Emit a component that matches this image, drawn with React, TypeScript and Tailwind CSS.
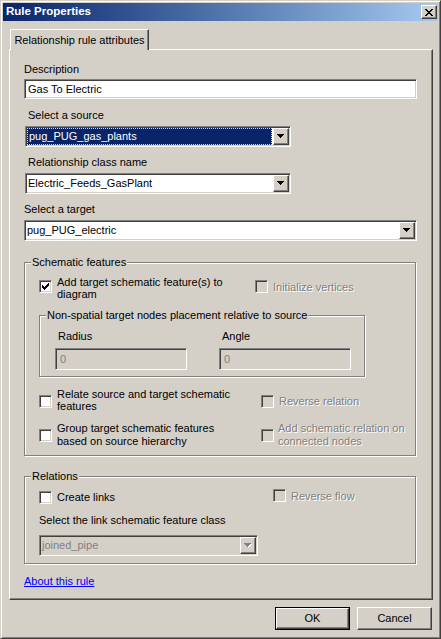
import type { ReactNode } from 'react'

const sunken =
  'border border-t-[#808080] border-l-[#808080] border-b-white border-r-white shadow-[inset_1px_1px_0_#404040,inset_-1px_-1px_0_#d4d0c8]'
const raised =
  'border border-t-white border-l-white border-b-[#404040] border-r-[#404040] shadow-[inset_-1px_-1px_0_#808080]'
const etched = 'relative border border-[#808080] shadow-[inset_1px_1px_0_white,1px_1px_0_white]'
const dim = 'text-[#808080] [text-shadow:1px_1px_0_white]'

const CHECK = [
  [6, 0], [5, 1], [6, 1], [0, 2], [4, 2], [5, 2], [6, 2], [0, 3], [1, 3], [3, 3], [4, 3],
  [5, 3], [0, 4], [1, 4], [2, 4], [3, 4], [4, 4], [1, 5], [2, 5], [3, 5], [2, 6],
]

const CLOSE = [
  [0, 0], [1, 0], [6, 0], [7, 0], [1, 1], [2, 1], [5, 1], [6, 1], [2, 2], [3, 2], [4, 2],
  [5, 2], [3, 3], [4, 3], [2, 4], [3, 4], [4, 4], [5, 4], [1, 5], [2, 5], [5, 5], [6, 5],
  [0, 6], [1, 6], [6, 6], [7, 6],
]

function Pixels({ cells, w, h, color }: { cells: number[][]; w: number; h: number; color: string }) {
  return (
    <svg width={w} height={h} viewBox={`0 0 ${w} ${h}`} shapeRendering="crispEdges">
      {cells.map(([x, y]) => (
        <rect key={`${x}-${y}`} x={x} y={y} width={1} height={1} fill={color} />
      ))}
    </svg>
  )
}

function Arrow({ disabled }: { disabled?: boolean }) {
  const tri = 'M0 0H7V1H6V2H5V3H4V4H3V3H2V2H1V1H0Z'
  return (
    <svg width={8} height={5} viewBox="0 0 8 5" shapeRendering="crispEdges">
      {disabled && <path d={tri} fill="#ffffff" transform="translate(1 1)" />}
      <path d={tri} fill={disabled ? '#808080' : '#000000'} />
    </svg>
  )
}

function CheckBox({ checked, disabled }: { checked?: boolean; disabled?: boolean }) {
  return (
    <div
      className={`flex h-[13px] w-[13px] shrink-0 items-center justify-center ${sunken} ${
        disabled ? 'bg-[#d4d0c8]' : 'bg-white'
      }`}
    >
      {checked && <Pixels cells={CHECK} w={7} h={7} color="#000000" />}
    </div>
  )
}

function Combo({
  value,
  className,
  selected,
  disabled,
}: {
  value: string
  className: string
  selected?: boolean
  disabled?: boolean
}) {
  return (
    <div className={`flex h-[21px] p-[1px] ${sunken} ${className} ${disabled ? 'bg-[#d4d0c8]' : 'bg-white'}`}>
      <div
        className={`mr-[1px] flex flex-1 items-center pl-[1px] leading-[13px] ${
          selected
            ? 'border border-dotted border-[#f0dca0] bg-[#0a246a] text-white'
            : disabled
              ? 'text-[#808080]'
              : ''
        }`}
      >
        {value}
      </div>
      <div className={`flex h-[17px] w-[16px] shrink-0 items-center justify-center bg-[#d4d0c8] ${raised}`}>
        <Arrow disabled={disabled} />
      </div>
    </div>
  )
}

function Group({ label, className, children }: { label: string; className: string; children: ReactNode }) {
  return (
    <div className={`${etched} ${className}`}>
      <span className="absolute -top-[7px] left-[6px] bg-[#d4d0c8] px-[1px] leading-[13px]">{label}</span>
      {children}
    </div>
  )
}

function Button({ children, isDefault }: { children: ReactNode; isDefault?: boolean }) {
  if (isDefault) {
    return (
      <div className="h-[23px] w-[75px] border border-black">
        <div className={`flex h-full w-full items-center justify-center ${raised}`}>{children}</div>
      </div>
    )
  }
  return <div className={`flex h-[23px] w-[75px] items-center justify-center ${raised}`}>{children}</div>
}

export default function App() {
  return (
    <div className="h-[639px] w-[441px] overflow-hidden border border-t-[#d4d0c8] border-l-[#d4d0c8] border-r-[#404040] border-b-[#404040] bg-[#d4d0c8] p-[2px] font-['Liberation_Sans',Arial,sans-serif] text-[11px] text-black shadow-[inset_1px_1px_0_white,inset_-1px_-1px_0_#808080]">
      <div className="flex h-[18px] items-center justify-between bg-linear-to-r from-[#0a246a] to-[#a6caf0] pl-[3px] pr-[1px]">
        <span className="text-[11.5px] font-bold text-white">Rule Properties</span>
        <div className={`flex h-[14px] w-[16px] items-center justify-center bg-[#d4d0c8] ${raised}`}>
          <Pixels cells={CLOSE} w={8} h={7} color="#000000" />
        </div>
      </div>

      <div className="pl-[6px] pr-[5px]">
        <div className={`relative z-10 mt-[8px] ml-[1px] flex h-[21px] w-[139px] items-center justify-center border border-b-0 border-t-white border-l-white border-r-[#404040] bg-[#d4d0c8] shadow-[inset_-1px_0_0_#808080]`}>
          Relationship rule attributes
        </div>

        <div className={`-mt-[1px] h-[551px] pl-[14px] ${raised}`}>
          <div className="mt-[13px] leading-[13px]">Description</div>
          <div className={`mt-[3px] flex h-[20px] w-[393px] items-center bg-white pl-[3px] ${sunken}`}>
            Gas To Electric
          </div>

          <div className="mt-[10px] ml-[4px] leading-[13px]">Select a source</div>
          <Combo value="pug_PUG_gas_plants" className="mt-[4px] ml-[1px] w-[266px]" selected />

          <div className="mt-[9px] ml-[4px] leading-[13px]">Relationship class name</div>
          <Combo value="Electric_Feeds_GasPlant" className="mt-[4px] ml-[1px] w-[266px]" />

          <div className="mt-[9px] leading-[13px]">Select a target</div>
          <Combo value="pug_PUG_electric" className="mt-[4px] w-[393px]" />

          <Group label="Schematic features" className="mt-[21px] h-[194px] w-[392px]">
            <div className="mt-[13px] flex">
              <div className="ml-[14px] flex w-[216px] items-start">
                <div className="mt-[4px]">
                  <CheckBox checked />
                </div>
                <div className="ml-[5px] leading-[12px]">
                  Add target schematic feature(s) to
                  <br />
                  diagram
                </div>
              </div>
              <div className="flex items-start">
                <div className="mt-[4px]">
                  <CheckBox disabled />
                </div>
                <div className={`mt-[5px] ml-[5px] leading-[12px] ${dim}`}>Initialize vertices</div>
              </div>
            </div>

            <Group
              label="Non-spatial target nodes placement relative to source"
              className="mt-[15px] ml-[14px] h-[62px] w-[326px]"
            >
              <div className="mt-[14px] ml-[15px] flex gap-[32px]">
                <div>
                  <div className="pl-[3px] leading-[13px]">Radius</div>
                  <div className={`mt-[5px] flex h-[22px] w-[132px] items-center pl-[4px] text-[#808080] ${sunken}`}>
                    0
                  </div>
                </div>
                <div>
                  <div className="pl-[3px] leading-[13px]">Angle</div>
                  <div className={`mt-[5px] flex h-[22px] w-[132px] items-center pl-[4px] text-[#808080] ${sunken}`}>
                    0
                  </div>
                </div>
              </div>
            </Group>

            <div className="mt-[11px] flex">
              <div className="ml-[14px] flex w-[222px] items-start">
                <div className="mt-[7px]">
                  <CheckBox />
                </div>
                <div className="ml-[5px] leading-[12px]">
                  Relate source and target schematic
                  <br />
                  features
                </div>
              </div>
              <div className="flex items-start">
                <div className="mt-[7px]">
                  <CheckBox disabled />
                </div>
                <div className={`mt-[7px] ml-[5px] leading-[12px] ${dim}`}>Reverse relation</div>
              </div>
            </div>

            <div className="mt-[10px] flex">
              <div className="ml-[14px] flex w-[222px] items-start">
                <div className="mt-[7px]">
                  <CheckBox />
                </div>
                <div className="ml-[5px] leading-[13px]">
                  Group target schematic features
                  <br />
                  based on source hierarchy
                </div>
              </div>
              <div className="flex items-start">
                <div className="mt-[7px]">
                  <CheckBox disabled />
                </div>
                <div className={`ml-[4px] leading-[13px] ${dim}`}>
                  Add schematic relation on
                  <br />
                  connected nodes
                </div>
              </div>
            </div>
          </Group>

          <Group label="Relations" className="mt-[20px] h-[88px] w-[392px]">
            <div className="mt-[12px] flex">
              <div className="ml-[14px] flex w-[234px] items-start">
                <div className="mt-[2px]">
                  <CheckBox />
                </div>
                <div className="mt-[2px] ml-[5px] leading-[12px]">Create links</div>
              </div>
              <div className="flex items-start">
                <CheckBox disabled />
                <div className={`mt-[1px] ml-[5px] leading-[12px] ${dim}`}>Reverse flow</div>
              </div>
            </div>
            <div className="mt-[10px] ml-[14px] leading-[13px]">Select the link schematic feature class</div>
            <Combo value="joined_pipe" className="mt-[8px] ml-[14px] w-[219px]" disabled />
          </Group>

          <div className="mt-[11px] leading-[13px]">
            <span className="text-[#0000ff] underline">About this rule</span>
          </div>
        </div>
      </div>

      <div className="mt-[7px] flex justify-end gap-[7px] pr-[6px]">
        <Button isDefault>OK</Button>
        <Button>Cancel</Button>
      </div>
    </div>
  )
}
